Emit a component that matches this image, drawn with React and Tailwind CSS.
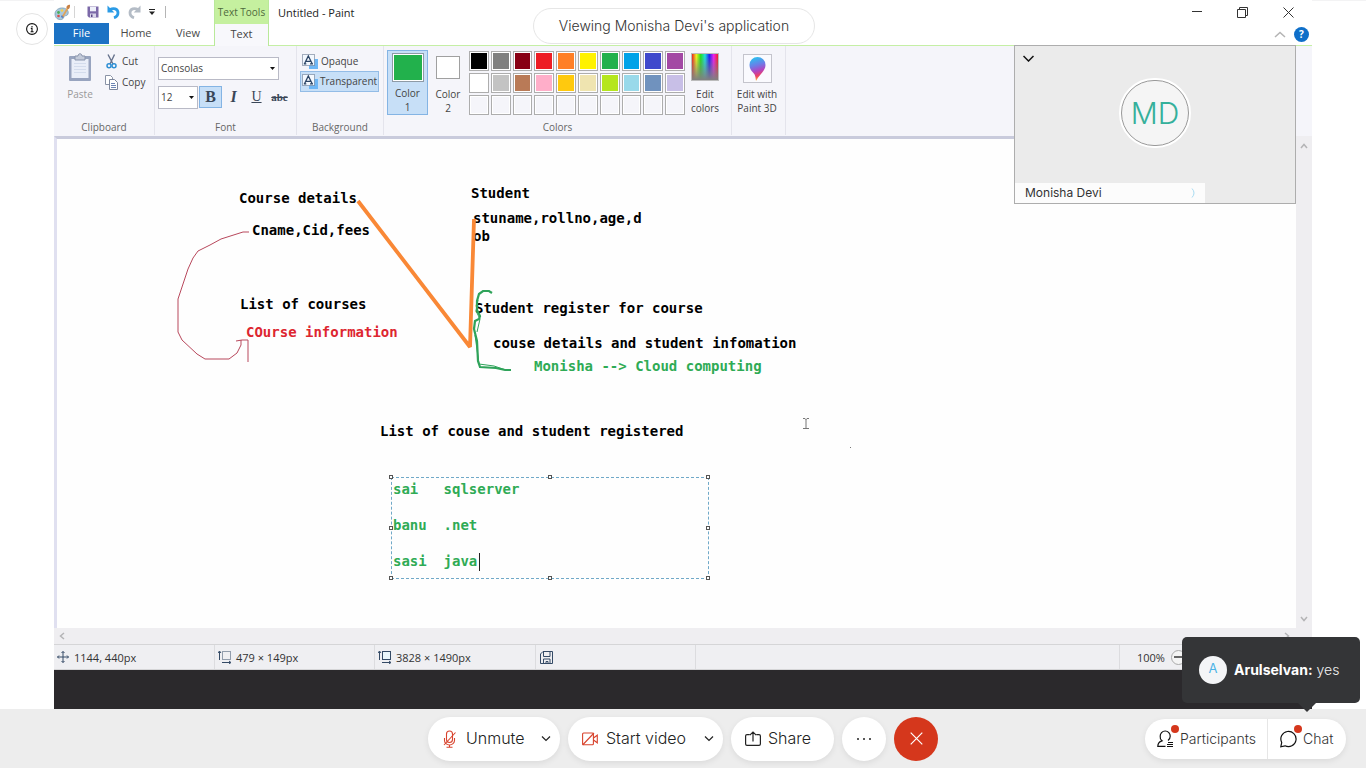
import React from "react";

const ui = "font-['Open_Sans','Noto_Sans',sans-serif]";

const swatches = [
  "bg-black", "bg-[#7f7f7f]", "bg-[#880015]", "bg-[#ed1c24]", "bg-[#ff7f27]",
  "bg-[#fff200]", "bg-[#22b14c]", "bg-[#00a2e8]", "bg-[#3f48cc]", "bg-[#a349a4]",
  "bg-white", "bg-[#c3c3c3]", "bg-[#b97a57]", "bg-[#ffaec9]", "bg-[#ffc90e]",
  "bg-[#efe4b0]", "bg-[#b5e61d]", "bg-[#99d9ea]", "bg-[#7092be]", "bg-[#c8bfe7]",
  ...Array(10).fill("bg-[#f5f5fa]"),
];

const notes = [
  { text: "Course details", at: "left-[182px] top-[50px]" },
  { text: "Cname,Cid,fees", at: "left-[195px] top-[82px]" },
  { text: "List of courses", at: "left-[183px] top-[156px]" },
  { text: "COurse information", at: "left-[189px] top-[184px] text-[#dd2630]" },
  { text: "Student", at: "left-[414px] top-[45px]" },
  { text: "stuname,rollno,age,d\nob", at: "left-[416px] top-[70px]" },
  { text: "Student register for course", at: "left-[418px] top-[160px]" },
  { text: "couse details and student infomation", at: "left-[436px] top-[195px]" },
  { text: "Monisha --> Cloud computing", at: "left-[477px] top-[218px] text-[#2fab55]" },
  { text: "List of couse and student registered", at: "left-[323px] top-[283px]" },
];

const handles = [
  "-left-[3px] -top-[3px]", "left-1/2 -ml-[2px] -top-[3px]", "-right-[2px] -top-[3px]",
  "-left-[3px] top-1/2 -mt-[2px]", "-right-[2px] top-1/2 -mt-[2px]",
  "-left-[3px] -bottom-[2px]", "left-1/2 -ml-[2px] -bottom-[2px]", "-right-[2px] -bottom-[2px]",
];

function PaletteIcon() {
  return (
    <svg width="17" height="17" viewBox="0 0 17 17" aria-hidden="true">
      <path d="M1 10C1 6 5 3.500 9 4c4 .4 6 3 5 6-.7 2-2.500 1.500-3.500 2-1 .6-.5 3-3 3.500C4 16 1 14 1 10z" fill="#a9c8dc" stroke="#7296ae" strokeWidth=".7" />
      <circle cx="4.500" cy="8.500" r="1.400" fill="#4cae5b" />
      <circle cx="4.500" cy="12" r="1.300" fill="#dc4b47" />
      <circle cx="8" cy="6.500" r="1.300" fill="#f3cf4b" />
      <circle cx="8.500" cy="12.500" r="1.300" fill="#4570c4" />
      <path d="M8 12L13 3.500l1.500 1L9.500 13z" fill="#e0a25a" />
      <path d="M12.500 4C12 2 14 .5 16 .8c0 2 0 4-1.800 4.500z" fill="#c98145" />
    </svg>
  );
}

function SaveIcon() {
  return (
    <svg width="12" height="12" viewBox="0 0 12 12" aria-hidden="true">
      <path d="M.5.5h11v11H2L.5 10z" fill="#7b68a8" />
      <path d="M3 .8h6v4.500H3z" fill="#eef0fa" />
      <path d="M3 7.500h6v4H3z" fill="#d9d6ea" />
      <path d="M4 8.500h1.500v2.500H4z" fill="#574585" />
    </svg>
  );
}

function UndoIcon({ color, flip }) {
  return (
    <svg width="13" height="14" viewBox="0 0 13 14" className={flip ? "-scale-x-100" : ""} aria-hidden="true">
      <path d="M3 4.500C6.500 2.800 11 3.500 11 7.800c0 2.700-1.700 4.200-4 5" fill="none" stroke={color} strokeWidth="2.800" />
      <path d="M.5.5v7h6.800z" fill={color} />
    </svg>
  );
}

function PasteIcon() {
  return (
    <svg width="24" height="29" viewBox="0 0 24 29" aria-hidden="true">
      <rect x="1" y="3" width="22" height="25" rx="1" fill="#98a4bf" />
      <rect x="3.500" y="6" width="17" height="19" fill="#e9eef8" />
      <path d="M6 10.500h12M6 13.500h12M6 16.500h12M6 19.500h12" stroke="#d3dcec" />
      <path d="M7 3h3c0-3 4-3 4 0h3v4H7z" fill="#c3cad9" stroke="#8893ab" />
    </svg>
  );
}

function CutIcon() {
  return (
    <svg width="11" height="15" viewBox="0 0 11 15" aria-hidden="true">
      <path d="M2 .5l5 9.500M8.500.5L4 10" stroke="#66728c" strokeWidth="1.400" />
      <circle cx="3" cy="11.800" r="2" fill="none" stroke="#2f8fd4" strokeWidth="1.500" />
      <circle cx="8" cy="11.800" r="2" fill="none" stroke="#2f8fd4" strokeWidth="1.500" />
    </svg>
  );
}

function CopyIcon() {
  return (
    <svg width="13" height="15" viewBox="0 0 13 15" aria-hidden="true">
      <path d="M.5.5h5l2 2v7h-7z" fill="#fff" stroke="#8a93a6" />
      <path d="M4.500 4.500h5l3 3v7h-8z" fill="#fff" stroke="#7d879c" />
      <path d="M6 8.500h4M6 10.500h5M6 12.500h5" stroke="#6d86b5" />
    </svg>
  );
}

function TextBgIcon() {
  return (
    <svg width="16" height="15" viewBox="0 0 16 15" aria-hidden="true">
      <path d="M7 5h9v10H7z" fill="#6db6f5" />
      <rect x=".5" y=".5" width="12" height="11" fill="#f3f8fe" stroke="#53647e" strokeDasharray="1 1" />
      <path d="M2.500 9.800L6.300 2l3.900 7.800M4 7.300h4.500M1.800 9.800h2.500M8 9.800h3" fill="none" stroke="#2c4566" strokeWidth="1.300" />
    </svg>
  );
}

function SizeIcon({ dashed }) {
  return (
    <svg width="14" height="14" viewBox="0 0 14 14" aria-hidden="true">
      <rect x="4.500" y="1.500" width="8" height="8" fill={dashed ? "none" : "#eaf6fb"} stroke="#344a66" strokeDasharray={dashed ? "1 1" : undefined} />
      <path d="M1.500 10V1.500M0 3l1.500-2L3 3M4 12.500h8.500M11 11l2 1.500-2 1.500" fill="none" stroke="#344a66" />
    </svg>
  );
}

function Chevron({ d = "M1 1.500l4 4 4-4", className, w = 10, h = 7, weight = 1.5 }) {
  return (
    <svg width={w} height={h} viewBox={`0 0 ${w} ${h}`} className={className} fill="none" stroke="currentColor" strokeWidth={weight} aria-hidden="true">
      <path d={d} />
    </svg>
  );
}

function SelectArrow() {
  return (
    <svg width="5" height="3" viewBox="0 0 5 3" className="pointer-events-none absolute right-[4px]" aria-hidden="true">
      <path d="M0 0h5L2.500 3z" fill="#111" />
    </svg>
  );
}

function TitleBar() {
  return (
    <header className="flex h-[46px] border-b border-[#c5efa5] bg-white">
      <div className="flex w-[160px] flex-col">
        <div className="flex h-[23px] items-center pt-[2px]">
          <PaletteIcon />
          <span className="ml-[3px] h-3 w-px bg-[#d5d5d5]" />
          <button aria-label="Save" className="ml-3"><SaveIcon /></button>
          <button aria-label="Undo" className="ml-2"><UndoIcon color="#2b9be6" /></button>
          <button aria-label="Redo" className="ml-2"><UndoIcon color="#b4bcc6" flip /></button>
          <button aria-label="Customize toolbar" className="ml-2">
            <svg width="6" height="6" viewBox="0 0 6 6"><path d="M0 .5h6" stroke="#222" /><path d="M0 2.500h6L3 6z" fill="#222" /></svg>
          </button>
          <span className="ml-[10px] h-3 w-px bg-[#b5b5b5]" />
        </div>
        <nav className="flex h-[23px] pb-px text-[11px] text-[#4a4a4a]">
          <button className="w-[55px] bg-[#1c72c4] text-white">File</button>
          <button className="w-[54px]">Home</button>
          <button className="w-[50px]">View</button>
        </nav>
      </div>
      <div className="flex h-[46px] w-[55px] flex-col border-x border-[#b9e99a] text-[10px]">
        <div className="flex h-[24px] items-center justify-center bg-[#c5f09f] whitespace-nowrap text-[#4f6a3c]">Text Tools</div>
        <button className="flex-1 bg-[#f8f8fc] pb-[2px] text-[11px] text-[#444]">Text</button>
      </div>
      <h1 className="ml-[9px] pt-[5px] text-[11px] leading-4 text-[#222]">Untitled - Paint</h1>
      <div className="ml-auto flex flex-col items-end">
        <div className="flex h-[24px] items-center gap-[35px] pr-[18px] text-[#333]">
          <button aria-label="Minimize"><svg width="10" height="10" viewBox="0 0 10 10"><path d="M0 4.500h10" stroke="currentColor" /></svg></button>
          <button aria-label="Restore"><svg width="11" height="11" viewBox="0 0 11 11" fill="none" stroke="currentColor"><path d="M.5 2.500h8v8h-8zM2.500 2.500v-2h8v8h-2" /></svg></button>
          <button aria-label="Close"><svg width="11" height="11" viewBox="0 0 11 11" stroke="currentColor"><path d="M.5.5l10 10M10.500.5l-10 10" /></svg></button>
        </div>
        <div className="flex h-[21px] items-center gap-[8px] pr-[3px]">
          <button aria-label="Collapse ribbon" className="text-[#b4b4b4]"><Chevron w={12} h={7} d="M1 6l5-4.500L11 6" /></button>
          <button aria-label="Help" className="flex h-[15px] w-[15px] items-center justify-center rounded-full bg-[#0f6fc9] text-[10px] font-bold text-white">?</button>
        </div>
      </div>
    </header>
  );
}

function Group({ label, className, children }) {
  return (
    <section className={`flex flex-col border-r border-[#e4e4ec] ${className}`}>
      <div className="flex flex-1">{children}</div>
      <div className="h-[15px] text-center text-[10px] leading-[15px] text-[#666]">{label}</div>
    </section>
  );
}

function Ribbon() {
  return (
    <div className="flex h-[90px] bg-[#f5f5fa] pb-[1px] text-[10px] text-[#444]">
      <Group label="Clipboard" className="w-[101px]">
        <button className="ml-[13px] flex w-[26px] flex-col items-center gap-[5px] pt-[7px] text-[#999]">
          <PasteIcon />
          <span className="leading-[14px]">Paste</span>
        </button>
        <div className="ml-[12px] flex flex-col gap-[6px] pt-[8px]">
          <button className="flex items-center gap-[5px] leading-[15px]"><span className="flex w-[12px] justify-center"><CutIcon /></span>Cut</button>
          <button className="flex items-center gap-[4px] leading-[15px]"><CopyIcon />Copy</button>
        </div>
      </Group>
      <Group label="Font" className="w-[142px]">
        <div className="flex flex-col gap-[6px] pt-[11px] pl-[3px]">
          <div className="relative flex w-[121px] items-center">
            <select aria-label="Font family" className="h-[23px] w-full appearance-none border border-[#b9bac6] bg-white pl-[2px]"><option>Consolas</option></select>
            <SelectArrow />
          </div>
          <div className="flex">
            <div className="relative flex w-[40px] items-center">
              <select aria-label="Font size" className="h-[23px] w-full appearance-none border border-[#b9bac6] bg-white pl-[2px]"><option>12</option></select>
              <SelectArrow />
            </div>
            <div className="ml-[1px] flex font-['Liberation_Serif',serif] text-[#3a4657]">
              <button aria-pressed="true" className="h-[22px] w-[23px] border border-[#84b4e4] bg-[#c7dff7] text-[16px] leading-5 font-bold">B</button>
              <button className="h-[22px] w-[23px] text-[16px] leading-5 font-bold italic">I</button>
              <button className="h-[22px] w-[23px] text-[14px] leading-5 underline">U</button>
              <button className="h-[22px] w-[23px] text-[11px] leading-5 font-bold line-through">abc</button>
            </div>
          </div>
        </div>
      </Group>
      <Group label="Background" className="w-[87px]">
        <div className="flex flex-col pt-[5px] pl-[3px]">
          <button className="flex h-[20px] items-center gap-[3px] pl-[2px]"><TextBgIcon />Opaque</button>
          <button aria-pressed="true" className="flex h-[21px] w-[79px] items-center gap-[2px] border border-[#93bce6] bg-[#c7dff7] pl-px whitespace-nowrap"><TextBgIcon />Transparent</button>
        </div>
      </Group>
      <Group label="Colors" className="w-[348px]">
        <div className="flex w-full items-start pt-[4px] pl-[3px] leading-[14px]">
          <button aria-pressed="true" className="flex h-[65px] w-[41px] flex-col items-center border border-[#84b4e4] bg-[#c7dff7] pt-[2px]">
            <span className="h-[31px] w-[32px] border border-[#8e9aa6] bg-white p-px"><span className="block h-full w-full bg-[#22b14c]" /></span>
            <span className="mt-[4px] px-1">Color<br />1</span>
          </button>
          <button className="flex h-[65px] w-[40px] flex-col items-center pt-[6px]">
            <span className="h-[24px] w-[24px] border border-[#a0a0a0] bg-white" />
            <span className="mt-[8px] px-1">Color<br />2</span>
          </button>
          <div className="mt-[1px] ml-px grid h-[64px] w-[216px] grid-cols-10 grid-rows-3 gap-x-[2px] gap-y-[2px]">
            {swatches.map((c, i) => (
              <button key={i} aria-label={`Palette color ${i + 1}`} className="border border-[#adadad] bg-white p-px"><span className={`block h-full w-full ${c}`} /></button>
            ))}
          </div>
          <button className="flex h-[65px] w-[40px] flex-col items-center pt-[3px]">
            <span className="block h-[29px] w-[28px] border border-[#bbb] bg-[linear-gradient(to_top,#808080,transparent_90%),linear-gradient(to_right,#e22,#ee2,#2d2,#2dd,#22e,#e2e,#e22)]" />
            <span className="mt-[6px]">Edit<br />colors</span>
          </button>
        </div>
      </Group>
      <Group label="" className="w-[54px]">
        <button className="flex w-full flex-col items-center pt-[8px] pr-[3px] leading-[14px]">
          <span className="flex h-[29px] w-[29px] items-center justify-center border border-[#c4c4cc] bg-[#fafafe]">
            <svg width="17" height="24" viewBox="0 0 17 24" aria-hidden="true">
              <defs>
                <linearGradient id="pin" x1=".3" y1="0" x2=".5" y2="1">
                  <stop offset="0" stopColor="#27c4ef" /><stop offset=".35" stopColor="#6b7de8" /><stop offset=".6" stopColor="#b344c0" /><stop offset=".8" stopColor="#ee4163" /><stop offset="1" stopColor="#ffc12e" />
                </linearGradient>
              </defs>
              <path d="M8.500 0a8 8 0 0 1 8 8c0 6-6 9-9.500 16-.5-4-.5-6-3-8.500C2 13.500.5 11.500.5 8a8 8 0 0 1 8-8z" fill="url(#pin)" />
            </svg>
          </span>
          <span className="mt-[4px] whitespace-nowrap">Edit with<br />Paint 3D</span>
        </button>
      </Group>
    </div>
  );
}

function Canvas() {
  return (
    <main className="flex flex-1">
      <div className="relative flex-1 overflow-hidden border-t-[3px] border-l-[3px] border-t-[#c9cbdc] border-l-[#e0e0f0] bg-[#fefefe] font-['DejaVu_Sans_Mono','Liberation_Mono',monospace] text-[14px] leading-[18px] font-bold text-black">
        {notes.map((n) => (
          <p key={n.text} className={`absolute whitespace-pre ${n.at}`}>{n.text}</p>
        ))}
        <svg className="absolute top-0 left-0" width="900" height="480" viewBox="57 139 900 480" fill="none" aria-hidden="true">
          <path d="M358 201L470 347L474 219" stroke="#f98836" strokeWidth="3.800" strokeLinejoin="bevel" />
          <path d="M249 232h-6l-22 7-11 6-12 6-5 7-5 11-6 18-4 12v33l4 8 15 14 8 5h24l8-6 4-8v-5M236 341l6-1h6v22" stroke="#b8485c" strokeWidth="1" />
          <path d="M492 293l-3-2h-6l-4 3-2 7v9l3 6-1 3-4 2-1 8 3 12 1 20 2 6 16 1 9 2h6" stroke="#2fa35a" strokeWidth="2.200" />
          <path d="M478 300l-2 11 4 8-3 13M475 335l4 29 15 2 12 4" stroke="#2fa35a" strokeWidth="1" />
          <path d="M803 418.500h2l1 1 1-1h2M806 419v9M803 428.500h6" stroke="#777" />
          <path d="M850 447.500h1" stroke="#777" />
        </svg>
        <div className="absolute top-[338px] left-[334px] h-[102px] w-[318px] border border-dashed border-[#70a9c8]">
          <textarea
            aria-label="Canvas text"
            spellCheck={false}
            defaultValue={"sai   sqlserver\n\nbanu  .net\n\nsasi  java"}
            className="block h-full w-full resize-none overflow-hidden bg-transparent pt-[2px] pl-px text-[#2fab55] outline-none"
          />
          <span className="absolute top-[75px] left-[87px] h-[18px] w-px bg-[#222]" />
          {handles.map((h) => (
            <span key={h} className={`absolute h-[4px] w-[4px] border border-[#555] bg-white ${h}`} />
          ))}
        </div>
      </div>
      <div className="flex w-4 flex-col items-center justify-between bg-[#efeef1] pt-[7px] pb-[6px] text-[#b4b4b6]">
        <button aria-label="Scroll up"><Chevron w={8} h={6} d="M1 5l3-3.500L7 5" className="block" /></button>
        <button aria-label="Scroll down"><Chevron w={8} h={6} d="M1 1l3 3.500L7 1" className="block" /></button>
      </div>
    </main>
  );
}

function StatusBar() {
  return (
    <>
      <div className="flex h-4 items-center justify-between bg-[#efeef1] pr-[22px] pl-[5px] text-[#b4b4b6]">
        <button aria-label="Scroll left"><Chevron w={6} h={8} d="M5 1L1.500 4 5 7" className="block" /></button>
        <button aria-label="Scroll right"><Chevron w={6} h={8} d="M1 1l3.500 3L1 7" className="block" /></button>
      </div>
      <div className="flex h-[26px] border-t border-b border-[#d5d5d7] bg-[#efeff2] text-[11px] text-[#333]">
        <div className="flex w-[161px] items-center gap-[5px] border-r border-[#dcdcdf] pl-[3px]">
          <svg width="12" height="12" viewBox="0 0 12 12" fill="none" stroke="#344a66" aria-hidden="true"><path d="M6 .5v11M.5 6h11M4.500 2L6 .5 7.500 2M4.500 10L6 11.500 7.500 10M2 4.500L.5 6 2 7.500M10 4.500L11.500 6 10 7.500" /></svg>
          <span className="pt-[2px]">1144, 440px</span>
        </div>
        <div className="flex w-[160px] items-center gap-[4px] border-r border-[#dcdcdf] pl-[3px]"><SizeIcon dashed /><span className="pt-[2px]">479 × 149px</span></div>
        <div className="flex w-[161px] items-center gap-[4px] border-r border-[#dcdcdf] pl-[3px]"><SizeIcon /><span className="pt-[2px]">3828 × 1490px</span></div>
        <div className="flex w-[160px] items-center border-r border-[#dcdcdf] pl-[4px]">
          <svg width="13" height="13" viewBox="0 0 13 13" fill="none" stroke="#344a66" aria-label="Saved size"><path d="M.5 3L3 .5h9.500v12H.5zM3.500.5v5h6.500v-5M3.500 12.500v-4.500h6.500v4.500M6 12.500v-2h2v2" /></svg>
        </div>
        <div className="flex-1" />
        <div className="flex w-[193px] items-center gap-[6px] border-l border-[#dcdcdf] pl-[17px]">
          <span className="pt-[2px]">100%</span>
          <button aria-label="Zoom out" className="flex h-[15px] w-[15px] items-center justify-center rounded-full border border-[#aaa] bg-[#f4f4f4]"><span className="h-[2px] w-[8px] bg-[#666]" /></button>
        </div>
      </div>
    </>
  );
}

function SpeakerPanel() {
  return (
    <aside className="absolute top-[44px] right-[70px] flex h-[159px] w-[282px] flex-col border border-[#adadad] bg-[#ebebeb] text-[#333]">
      <button aria-label="Collapse video" className="absolute top-[9px] left-[8px] text-[#111]"><Chevron w={11} h={7} d="M.5 1l5 5 5-5" /></button>
      <div className="mt-[32px] flex h-[70px] w-[72px] items-center justify-center self-center rounded-full border-2 border-white bg-white">
        <div className="flex h-full w-full items-center justify-center rounded-full border border-[#999] bg-[#f5f5f5] text-[30px] font-light text-[#35b09b]">MD</div>
      </div>
      <div className="mt-auto flex h-[20px] w-[190px] items-center justify-between bg-[#fcfcfc] pr-[10px] pl-[10px] text-[12px]">
        Monisha Devi
        <svg width="4" height="10" viewBox="0 0 4 10" fill="none" stroke="#a9dcf2" aria-hidden="true"><path d="M1 .5Q5 5 1 9.500" /></svg>
      </div>
    </aside>
  );
}

function ChatToast() {
  return (
    <aside className="absolute right-[6px] bottom-[65px] flex h-[66px] w-[178px] items-center gap-[7px] rounded-[5px] bg-[#343537] pl-[17px] text-[14px] text-[#f2f2f2]">
      <span className="flex h-[28px] w-[28px] items-center justify-center rounded-full bg-[#f4f5f7] pb-[2px] text-[13px] text-[#4cb3e6]">A</span>
      <span className="pb-[2px] font-light whitespace-nowrap"><b className="font-bold text-white">Arulselvan:</b> yes</span>
      <svg width="18" height="9" viewBox="0 0 18 9" className="absolute top-full left-[116px]" aria-hidden="true"><path d="M0 0h18L9 9z" fill="#343537" /></svg>
    </aside>
  );
}

function CallBar() {
  return (
    <footer className="grid h-[59px] grid-cols-[1fr_auto_1fr] items-center bg-[#ededed] text-[16px] font-light text-[#222]">
      <span />
      <div className="flex gap-2">
        <div className="flex h-11 w-[132px] rounded-full bg-white shadow-[0_2px_6px_rgba(0,0,0,0.08)]">
          <button className="flex flex-1 items-center gap-[10px] pl-[15px]">
            <svg width="13" height="18" viewBox="0 0 13 18" fill="none" stroke="#d8432d" strokeWidth="1.100" aria-hidden="true">
              <rect x="3.500" y="1" width="6" height="11.500" rx="3" /><path d="M1.500 8v2.500a5 4.500 0 0 0 5 4.500 5 4.500 0 0 0 5-4.500V8M6.500 15v2M3.500 17.300h6M1 15L12.500 2.500" />
            </svg>
            <span className="pb-[2px]">Unmute</span>
          </button>
          <button aria-label="Audio options" className="pr-[9px] pl-[10px]"><Chevron weight={1.2} /></button>
        </div>
        <div className="flex h-11 w-[155px] rounded-full bg-white shadow-[0_2px_6px_rgba(0,0,0,0.08)]">
          <button className="flex flex-1 items-center gap-[8px] pl-[14px] whitespace-nowrap">
            <svg width="16" height="14" viewBox="0 0 16 14" fill="none" stroke="#d8432d" strokeWidth="1.100" aria-hidden="true">
              <rect x=".6" y="1" width="10.800" height="11.800" rx="1" /><path d="M11.500 6l3.800-2.800v7.600L11.500 8M.6 13L12 1" />
            </svg>
            <span className="pb-[2px]">Start video</span>
          </button>
          <button aria-label="Video options" className="pr-[9px] pl-[10px]"><Chevron weight={1.2} /></button>
        </div>
        <button className="flex h-11 w-[103px] items-center gap-[7px] rounded-full bg-white pl-[14px] shadow-[0_2px_6px_rgba(0,0,0,0.08)]">
          <svg width="16" height="15" viewBox="0 0 16 15" fill="none" stroke="#222" strokeWidth="1.200" aria-hidden="true"><path d="M4.500 3.600H2a1.400 1.400 0 0 0-1.400 1.400v8A1.400 1.400 0 0 0 2 14.400h12a1.400 1.400 0 0 0 1.400-1.400V5A1.400 1.400 0 0 0 14 3.600h-2.500M8 10.500V1M4.800 4.200L8 1l3.200 3.200" /></svg>
          <span className="pb-[2px]">Share</span>
        </button>
        <button aria-label="More options" className="flex h-11 w-11 items-center justify-center gap-[4px] rounded-full bg-white shadow-[0_2px_6px_rgba(0,0,0,0.08)]">
          <svg width="16" height="4" viewBox="0 0 16 4" fill="#222" aria-hidden="true"><circle cx="2" cy="2" r="1" /><circle cx="8" cy="2" r="1" /><circle cx="14" cy="2" r="1" /></svg>
        </button>
        <button aria-label="Leave meeting" className="flex h-11 w-11 items-center justify-center rounded-full bg-[#d5371c]">
          <svg width="13" height="13" viewBox="0 0 13 13" stroke="#fff" strokeWidth="1.200" aria-hidden="true"><path d="M.7.7l11.600 11.600M12.300.7L.7 12.300" /></svg>
        </button>
      </div>
      <div className="mr-5 flex h-10 justify-self-end rounded-full bg-white text-[14px] text-[#333] shadow-[0_2px_6px_rgba(0,0,0,0.08)]">
        <button className="relative flex w-[123px] items-center gap-[6px] border-r border-[#e6e6e6] pl-3">
          <svg width="17" height="18" viewBox="0 0 17 18" fill="none" stroke="#111" aria-hidden="true">
            <path d="M8.500 16.400H.8c0-3.400 1.400-4.900 4.200-5.600A5 5 0 0 1 3.200 6.300 5 5 0 0 1 8.200 1a5 5 0 0 1 5 5.300c0 1.700-.9 3.300-2.200 4.200" strokeWidth="1.200" />
            <path d="M11 12.500h5M10 14.500h6M10 16.500h6" />
          </svg>
          <span className="pb-px">Participants</span>
          <span className="absolute top-[6px] left-[26px] h-2 w-2 rounded-full bg-[#d5371c]" />
        </button>
        <button className="relative flex w-[78px] items-center gap-[6px] pl-3">
          <svg width="17" height="18" viewBox="0 0 17 18" fill="none" stroke="#111" strokeWidth="1.200" aria-hidden="true"><path d="M.8 16.800l.9-4.300A7.600 7.600 0 1 1 5 15.800z" /></svg>
          <span className="pb-px">Chat</span>
          <span className="absolute top-[6px] left-[26px] h-2 w-2 rounded-full bg-[#d5371c]" />
        </button>
      </div>
    </footer>
  );
}

export default function App() {
  return (
    <div className="relative flex min-h-screen flex-col border-t border-[#f3f3f4] bg-white font-['Inter',sans-serif]">
      <div className="-mt-px flex flex-1">
        <div className="flex w-[54px] justify-center pt-[13px] pl-[9px]">
          <button aria-label="Meeting info" className="flex h-8 w-8 items-center justify-center rounded-full border border-[#e4e4e4]">
            <svg width="12" height="12" viewBox="0 0 12 12" fill="none" stroke="#111" strokeWidth="1.100" aria-hidden="true"><circle cx="6" cy="6" r="5.400" /><path d="M4.800 5.400H6V8.500M4.600 8.700h3M6 3v1.200" /></svg>
          </button>
        </div>
        <div className={`flex flex-1 flex-col ${ui}`}>
          <TitleBar />
          <Ribbon />
          <Canvas />
          <StatusBar />
          <div className="h-[39px] bg-[#2b292c]" />
        </div>
        <div className="w-[54px]" />
      </div>
      <div className="absolute inset-x-0 top-[7px] flex justify-center pr-[18px]">
        <p className="flex h-[36px] w-[282px] items-center justify-center rounded-full border border-[#e6e6e6] bg-white pb-[2px] text-[14px] font-light text-[#333]">Viewing Monisha Devi's application</p>
      </div>
      <SpeakerPanel />
      <ChatToast />
      <CallBar />
    </div>
  );
}
